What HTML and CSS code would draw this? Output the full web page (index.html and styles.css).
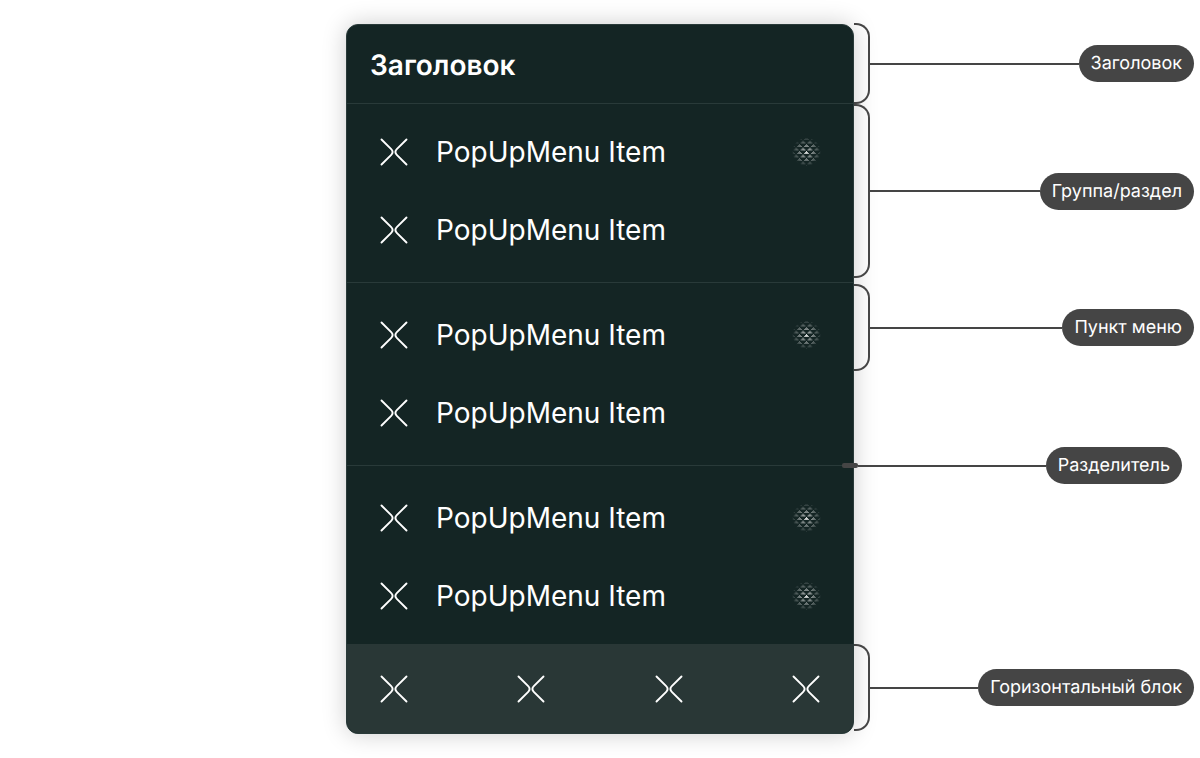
FILE: index.html
```
<!DOCTYPE html>
<html lang="ru">
<head>
    <meta charset="UTF-8">
    <meta name="viewport" content="width=device-width, initial-scale=1.0">
    <title>PopUpMenu</title>
    <link rel="stylesheet" href="styles.css">
</head>
<body>

<svg class="defs" aria-hidden="true">
    <defs>
        <symbol id="cross" viewBox="0 0 36 36">
            <path d="M5.5 5.5 L15.2 15.2 Q18 18 15.2 20.8 L5.5 30.5 M30.5 5.5 L20.8 15.2 Q18 18 20.8 20.8 L30.5 30.5" fill="none" stroke="#fff" stroke-width="1.9" stroke-linecap="round"/>
        </symbol>
        <pattern id="triangles" width="7" height="7" x="15" y="17" patternUnits="userSpaceOnUse">
            <path d="M3 0 H4 V1 H5 V2 H6 V3 H1 V2 H2 V1 H3 Z M0 3.5 H0.5 V4.5 H1.5 V5.5 H2.5 V6.5 H0 Z M7 3.5 H6.5 V4.5 H5.5 V5.5 H4.5 V6.5 H7 Z" fill="#fff"/>
        </pattern>
        <radialGradient id="fade">
            <stop offset="0" stop-color="#fff" stop-opacity="0.85"/>
            <stop offset="0.3" stop-color="#fff" stop-opacity="0.5"/>
            <stop offset="0.7" stop-color="#fff" stop-opacity="0.28"/>
            <stop offset="1" stop-color="#fff" stop-opacity="0.06"/>
        </radialGradient>
        <mask id="round">
            <circle cx="18.5" cy="18" r="14" fill="url(#fade)"/>
        </mask>
        <symbol id="dots" viewBox="0 0 36 36">
            <rect width="36" height="36" fill="url(#triangles)" mask="url(#round)"/>
        </symbol>
    </defs>
</svg>

<main class="page">
    <section class="menu">
        <h1 class="menu-title">Заголовок</h1>
        <div class="group group-first">
            <button class="item">
                <svg class="icon"><use href="#cross"/></svg>
                <span class="item-text">PopUpMenu Item</span>
                <svg class="icon"><use href="#dots"/></svg>
            </button>
            <button class="item">
                <svg class="icon"><use href="#cross"/></svg>
                <span class="item-text">PopUpMenu Item</span>
            </button>
        </div>
        <div class="group">
            <button class="item">
                <svg class="icon"><use href="#cross"/></svg>
                <span class="item-text">PopUpMenu Item</span>
                <svg class="icon"><use href="#dots"/></svg>
            </button>
            <button class="item">
                <svg class="icon"><use href="#cross"/></svg>
                <span class="item-text">PopUpMenu Item</span>
            </button>
        </div>
        <div class="group group-last">
            <button class="item">
                <svg class="icon"><use href="#cross"/></svg>
                <span class="item-text">PopUpMenu Item</span>
                <svg class="icon"><use href="#dots"/></svg>
            </button>
            <button class="item">
                <svg class="icon"><use href="#cross"/></svg>
                <span class="item-text">PopUpMenu Item</span>
                <svg class="icon"><use href="#dots"/></svg>
            </button>
        </div>
        <div class="actions">
            <button class="action" aria-label="Действие 1"><svg class="icon"><use href="#cross"/></svg></button>
            <button class="action" aria-label="Действие 2"><svg class="icon"><use href="#cross"/></svg></button>
            <button class="action" aria-label="Действие 3"><svg class="icon"><use href="#cross"/></svg></button>
            <button class="action" aria-label="Действие 4"><svg class="icon"><use href="#cross"/></svg></button>
        </div>
    </section>

    <aside class="notes">
        <div class="note note-title">
            <span class="bracket"></span>
            <span class="line"></span>
            <span class="label">Заголовок</span>
        </div>
        <div class="note note-group">
            <span class="bracket"></span>
            <span class="line"></span>
            <span class="label">Группа/раздел</span>
        </div>
        <div class="note note-item">
            <span class="bracket"></span>
            <span class="line"></span>
            <span class="label">Пункт меню</span>
        </div>
        <div class="note note-divider">
            <span class="marker"></span>
            <span class="line"></span>
            <span class="label">Разделитель</span>
        </div>
        <div class="note note-actions">
            <span class="bracket"></span>
            <span class="line"></span>
            <span class="label">Горизонтальный блок</span>
        </div>
    </aside>
</main>

</body>
</html>
```

FILE: styles.css
```
body {
    margin: 0;
    font-family: Inter, 'Liberation Sans', sans-serif;
    text-rendering: geometricPrecision;
    background-color: #fff;
}

.defs {
    position: absolute;
    width: 0;
    height: 0;
}

.page {
    display: grid;
    grid-template-columns: 1fr minmax(320px, 508px) 1fr;
    align-items: start;
    padding: 23px 0;
}

.menu {
    grid-column: 2;
    box-sizing: border-box;
    margin-top: 1px;
    border: 1px solid #293a39;
    border-radius: 12px;
    overflow: hidden;
    background-color: #142524;
    color: #fff;
    box-shadow: 0 0 24px rgba(0, 0, 0, 0.2);
}

.menu-title {
    margin: 0;
    padding: 23px 23px 21px;
    border-bottom: 1px solid #293a39;
    font-size: 28px;
    line-height: 34px;
    font-weight: 600;
}

.group {
    padding: 13px 0;
    border-bottom: 1px solid #293a39;
}

.group-first {
    padding-top: 9px;
}

.group-last {
    padding-bottom: 9px;
    border-bottom: 0;
}

.item {
    display: flex;
    align-items: center;
    gap: 24px;
    width: 100%;
    padding: 21px 29px;
    border: 0;
    background: none;
    color: inherit;
    font-family: inherit;
    font-size: 28px;
    line-height: 36px;
    text-align: left;
    cursor: pointer;
}

.item-text {
    flex: 1;
}

.icon {
    display: block;
    width: 36px;
    height: 36px;
}

.actions {
    display: flex;
    justify-content: space-between;
    padding: 27px 29px 26px;
    background-color: #293736;
}

.action {
    padding: 0;
    border: 0;
    background: none;
    cursor: pointer;
}

.notes {
    position: relative;
    padding-right: 6px;
}

.note {
    display: flex;
    align-items: center;
}

.note-title {
    height: 81px;
}

.note-group {
    height: 174px;
    margin-bottom: 6px;
}

.note-item {
    height: 87px;
    margin-bottom: 76px;
}

.note-divider {
    height: 37px;
    margin-bottom: 160px;
    padding-right: 12px;
}

.note-actions {
    height: 87px;
}

.bracket {
    box-sizing: border-box;
    align-self: stretch;
    width: 16px;
    border: 2px solid #454545;
    border-left: 0;
    border-radius: 0 14px 14px 0;
}

.marker {
    width: 16px;
    height: 5px;
    margin-left: -12px;
    border-radius: 2px;
    background-color: #454545;
}

.line {
    flex: 1;
    height: 2px;
    background-color: #454545;
}

.label {
    padding: 0 12px;
    border-radius: 19px;
    background-color: #454545;
    color: #fff;
    font-size: 18px;
    line-height: 37px;
    white-space: nowrap;
}
```
